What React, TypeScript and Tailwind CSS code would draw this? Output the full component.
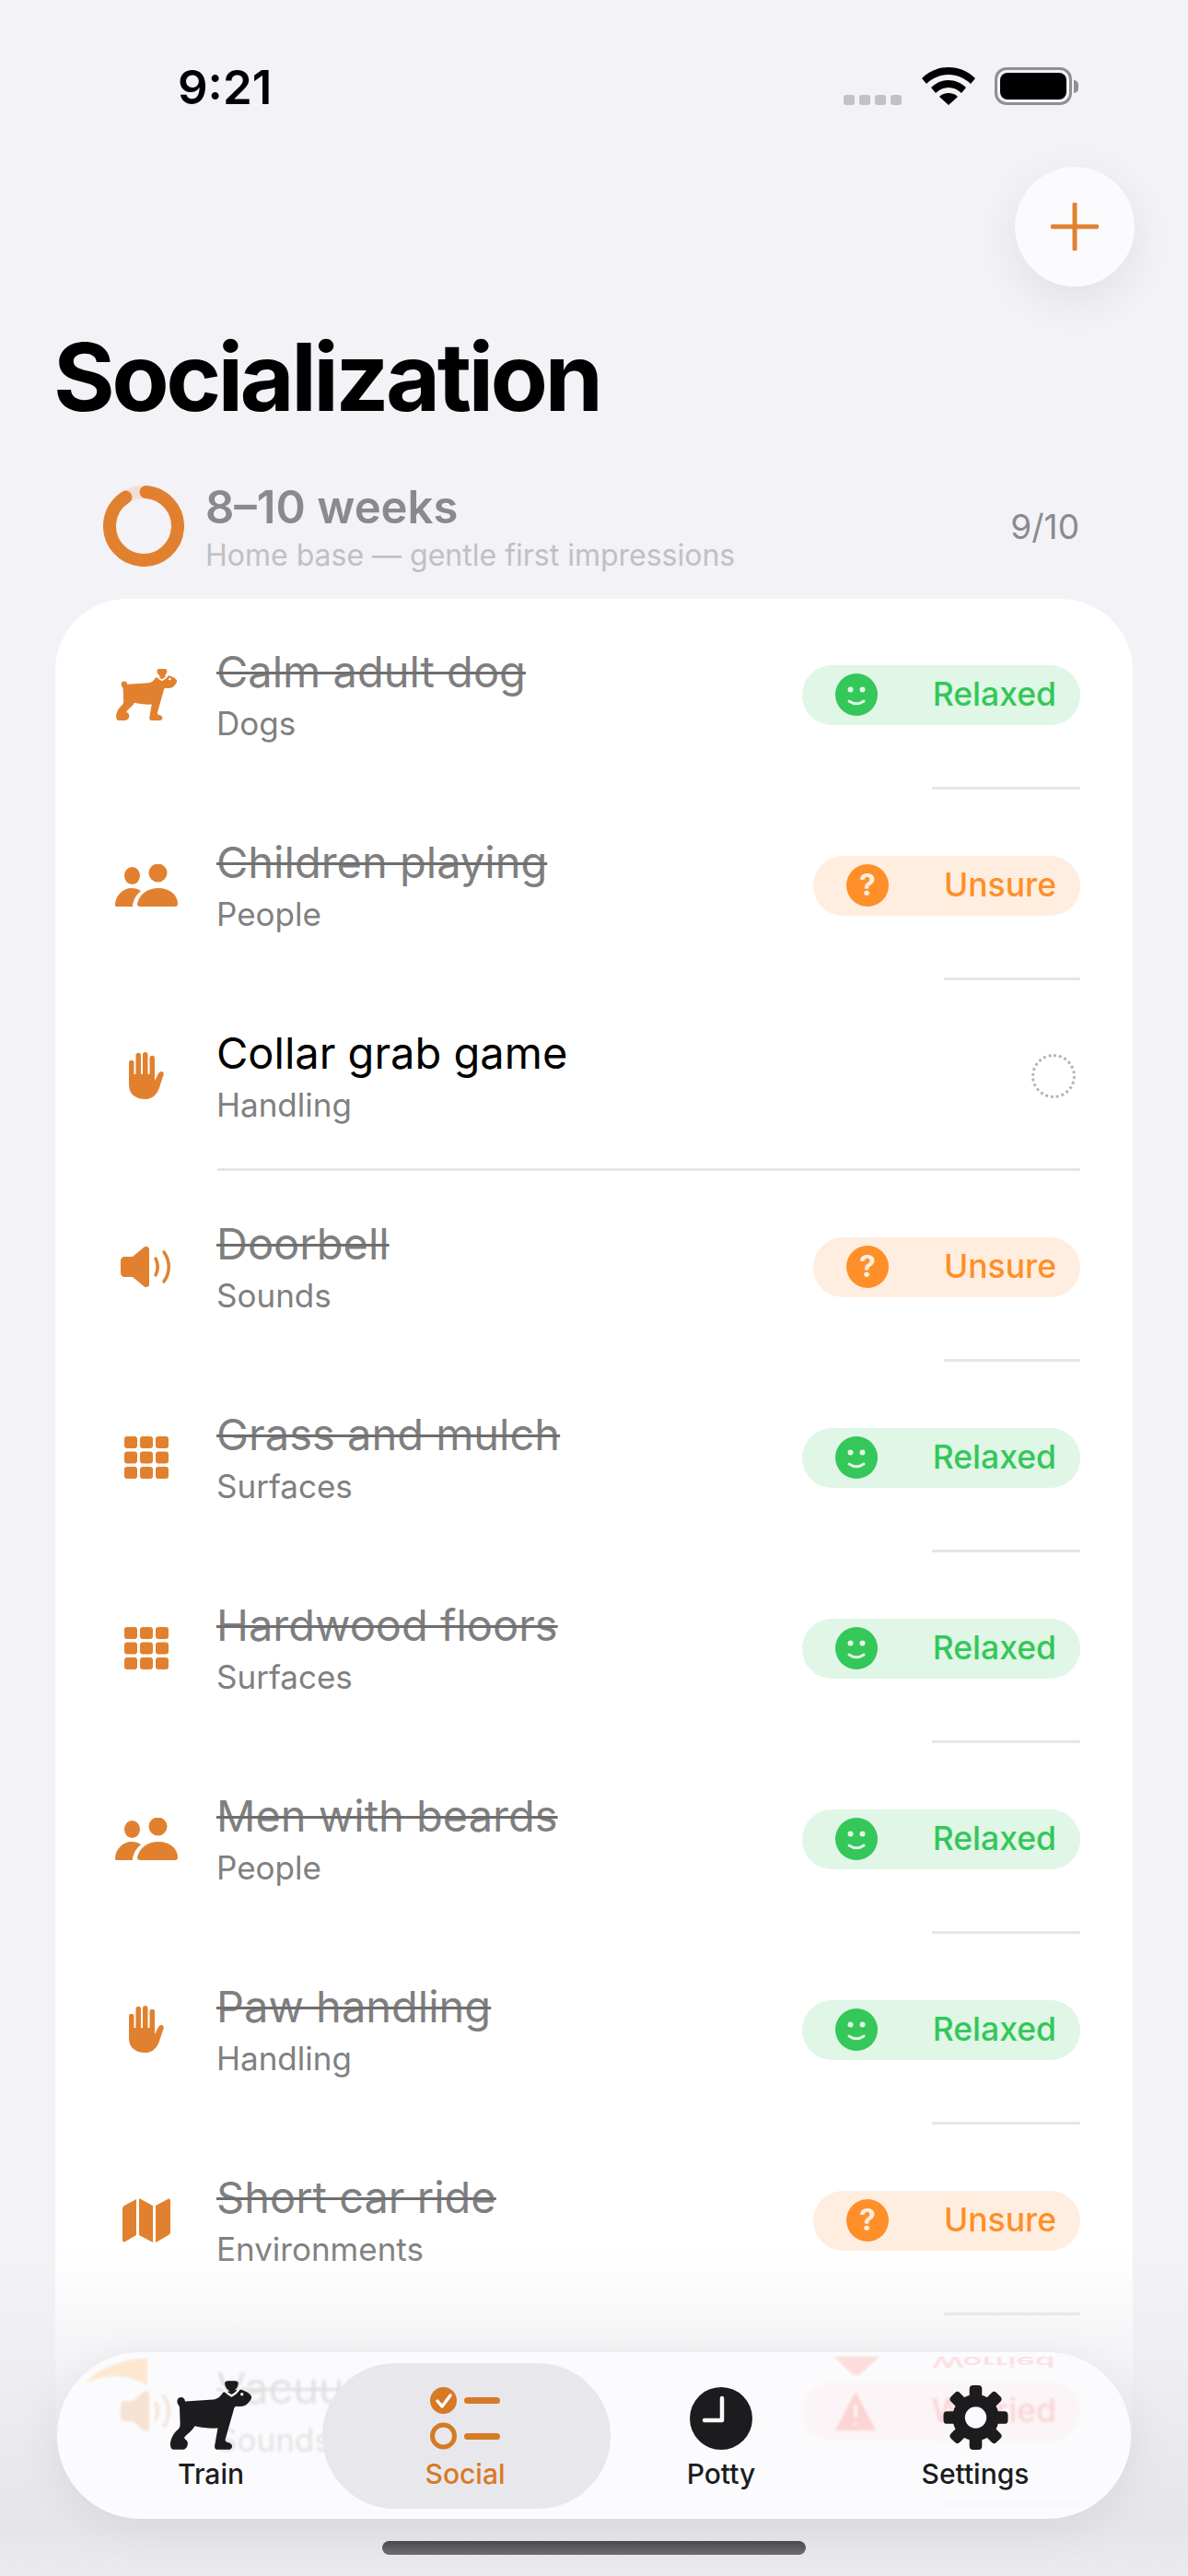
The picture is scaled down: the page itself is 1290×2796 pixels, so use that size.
import type { ReactNode } from "react";

const orange = "#e1812f";

function DogIcon({ className, fill, collar }: { className: string; fill: string; collar: string }) {
  return (
    <svg viewBox="0 0 268 225" className={className}>
      <path
        fill={fill}
        d="M30 85C28 80 22 74 22 67A13 13 0 0 1 48 67L140 61C155 60 165 50 172 38L225 28C240 30 255 38 262 46C268 52 265 60 258 68C250 80 235 87 216 83C212 83 208 88 207 95L180 190C178 196 182 200 188 201C196 202 202 208 202 214C202 221 196 225 188 225L155 225C147 225 144 220 145 212L155 155C130 156 100 154 80 148C72 162 58 172 48 182C44 186 46 190 50 192C56 195 58 202 56 210C54 220 46 225 38 225L12 225C4 225 0 218 0 208C0 190 10 172 24 160C30 155 32 148 32 140Z"
      />
      <path fill="none" stroke={collar} strokeWidth="7" d="M170 16C174 30 186 42 200 49C214 42 226 30 230 14" />
      <path fill={fill} d="M178 8C178 3 182 0 188 0H212C218 0 222 3 222 8C222 20 214 30 200 38C186 30 178 20 178 8Z" />
      <circle cx="234" cy="44" r="5" fill={collar} />
    </svg>
  );
}

function PeopleIcon() {
  return (
    <svg viewBox="0 0 68 46" className="h-[46px] w-[68px]" fill={orange}>
      <ellipse cx="18.5" cy="12.5" rx="8.5" ry="9.5" />
      <ellipse cx="46.5" cy="9.5" rx="10" ry="10" />
      <path d="M1 46c-1 0-1-2-1-3 1-9 8-17 18-17 4 0 7 1 10 3-5 4-8 9-9 15 0 2 0 2 1 2z" />
      <path d="M27 46c-2 0-3-1-3-3 2-10 11-17 23-17s21 7 21 17c0 2-1 3-3 3z" />
    </svg>
  );
}

function HandIcon() {
  return (
    <svg viewBox="0 0 38 52" className="h-[52px] w-[38px]" fill={orange}>
      <path d="M0 11.500a2.750 2.750 0 0 1 5.500 0V24h2V3.500a2.750 2.750 0 0 1 5.500 0V24h2V2.750a2.750 2.750 0 0 1 5.500 0V24h2V6.500a2.750 2.750 0 0 1 5.500 0V31l3.500-7c1-2 2.500-3 4-3 2 0 2.500 2 2 4l-5 15c-3 7-8 11-14 11C6 51 0 45 0 35z" />
    </svg>
  );
}

function SpeakerIcon() {
  return (
    <svg viewBox="0 0 56 44" className="h-[44px] w-[56px]">
      <path
        fill={orange}
        d="M0 15c0-2 2-4 4-4h9L25 1c2-2 6-1 6 2v38c0 3-4 4-6 2L13 33H4c-2 0-4-2-4-4z"
      />
      <path fill="none" stroke={orange} strokeWidth="3.500" strokeLinecap="round" d="M38 13c3 6 3 12 0 18" />
      <path fill="none" stroke={orange} strokeWidth="3.500" strokeLinecap="round" d="M47 6c7 10 7 22 0 32" />
    </svg>
  );
}

function GridIcon() {
  return (
    <svg viewBox="0 0 48 46" className="h-[46px] w-[48px]" fill={orange}>
      {[0, 17, 34].map((x) =>
        [0, 16.5, 33].map((y) => <rect key={`${x}-${y}`} x={x} y={y} width="14" height="13" rx="3" />),
      )}
    </svg>
  );
}

function MapIcon() {
  return (
    <svg viewBox="0 0 52 48" className="h-[48px] w-[52px]" fill={orange}>
      <path d="M0 11c0-1 1-2 2-3l13-7v39L3 47c-2 1-3 0-3-2z" />
      <path d="M18 0l15 8v40l-15-8z" />
      <path d="M36 8l13-7c2-1 3 0 3 2v34c0 1-1 2-2 3l-14 8z" />
    </svg>
  );
}

function SmileFace() {
  return (
    <svg viewBox="0 0 46 46" className="h-[46px] w-[46px]">
      <circle cx="23" cy="23" r="23" fill="#34c759" />
      <circle cx="16.5" cy="17.5" r="3" fill="#e0f6e6" />
      <circle cx="29.5" cy="17.5" r="3" fill="#e0f6e6" />
      <path d="M15 30c5 3.500 11 3.500 16 0" fill="none" stroke="#e0f6e6" strokeWidth="3" strokeLinecap="round" />
    </svg>
  );
}

function QuestionFace() {
  return (
    <div className="flex h-[46px] w-[46px] items-center justify-center rounded-full bg-[#ff8f28] text-[32px] leading-none font-bold text-[#feeee0]">
      ?
    </div>
  );
}

function WarnFace() {
  return (
    <svg viewBox="0 0 46 46" className="h-[46px] w-[46px]">
      <path d="M23 2L45 44H1z" fill="#ff3b30" />
      <path d="M23 16v14M23 35v3" stroke="#ffe2e0" strokeWidth="4" />
    </svg>
  );
}

type Mood = "Relaxed" | "Unsure" | "Worried" | null;

const moods = {
  Relaxed: { bg: "bg-[#e0f6e6]", text: "text-[#34c759]", icon: <SmileFace /> },
  Unsure: { bg: "bg-[#ffeee0]", text: "text-[#ff8f28]", icon: <QuestionFace /> },
  Worried: { bg: "bg-[#ffe2e0]", text: "text-[#ff3b30]", icon: <WarnFace /> },
};

function Badge({ mood }: { mood: Exclude<Mood, null> }) {
  const m = moods[mood];
  return (
    <div className={`flex h-[65px] items-center gap-[60px] rounded-full pr-[26px] pl-[36px] ${m.bg}`}>
      {m.icon}
      <span className={`text-[35.5px] leading-none font-medium ${m.text}`}>{mood}</span>
    </div>
  );
}

type RowData = { title: string; sub: string; icon: ReactNode; mood: Mood; sep: string };

const rows: RowData[] = [
  { title: "Calm adult dog", sub: "Dogs", icon: <DogIcon className="h-[56px] w-[67px]" fill={orange} collar="#ffffff" />, mood: "Relaxed", sep: "w-[161px]" },
  { title: "Children playing", sub: "People", icon: <PeopleIcon />, mood: "Unsure", sep: "w-[148px]" },
  { title: "Collar grab game", sub: "Handling", icon: <HandIcon />, mood: null, sep: "w-[937px]" },
  { title: "Doorbell", sub: "Sounds", icon: <SpeakerIcon />, mood: "Unsure", sep: "w-[148px]" },
  { title: "Grass and mulch", sub: "Surfaces", icon: <GridIcon />, mood: "Relaxed", sep: "w-[161px]" },
  { title: "Hardwood floors", sub: "Surfaces", icon: <GridIcon />, mood: "Relaxed", sep: "w-[161px]" },
  { title: "Men with beards", sub: "People", icon: <PeopleIcon />, mood: "Relaxed", sep: "w-[161px]" },
  { title: "Paw handling", sub: "Handling", icon: <HandIcon />, mood: "Relaxed", sep: "w-[161px]" },
  { title: "Short car ride", sub: "Environments", icon: <MapIcon />, mood: "Unsure", sep: "w-[148px]" },
  { title: "Vacuum cleaner", sub: "Sounds", icon: <SpeakerIcon />, mood: "Worried", sep: "w-[148px]" },
];

function Row({ row }: { row: RowData }) {
  return (
    <div className="flex h-[207px] flex-col">
      <div className="flex h-[204px] items-center pt-[4px] pr-[57px]">
        <div className="flex w-[175px] shrink-0 justify-center pl-[23px]">
          <div className="flex h-[60px] w-[80px] items-center justify-center">{row.icon}</div>
        </div>
        <div className="flex flex-col">
          <span
            className={`text-[47px] leading-[56px] ${row.mood ? "text-[#7f7f7f] line-through decoration-[#6e6e70] decoration-[3px]" : "text-black"}`}
          >
            {row.title}
          </span>
          <span className="mt-[6px] text-[35px] leading-[44px] text-[#808080]">{row.sub}</span>
        </div>
        <div className="ml-auto flex items-center">
          {row.mood ? (
            <Badge mood={row.mood} />
          ) : (
            <div className="mr-[5px] h-[48px] w-[48px] rounded-full border-[3px] border-dotted border-[#b5b5b8]" />
          )}
        </div>
      </div>
      <div className={`mr-[57px] ml-auto h-[3px] bg-[#e5e5ea] ${row.sep}`} />
    </div>
  );
}

function Ring() {
  return (
    <svg viewBox="0 0 88 88" className="mb-[5px] h-[88px] w-[88px] shrink-0 -rotate-90">
      <circle cx="44" cy="44" r="37" fill="none" stroke="#f0dfd2" strokeWidth="14" />
      <circle
        cx="44"
        cy="44"
        r="37"
        fill="none"
        stroke={orange}
        strokeWidth="14"
        strokeLinecap="round"
        pathLength="100"
        strokeDasharray="90 100"
        transform="rotate(4 44 44)"
      />
    </svg>
  );
}

function StatusBar() {
  return (
    <div className="flex h-[181px] items-start justify-between pr-[119px] pl-[193px]">
      <span className="mt-[65px] text-[51px] leading-[60px] font-semibold text-black">9:21</span>
      <div className="mt-[73px] flex items-end">
        <div className="flex gap-[5px]">
          {[0, 1, 2, 3].map((i) => (
            <div key={i} className="h-[11px] w-[12px] rounded-[3px] bg-[#c2c2c6]" />
          ))}
        </div>
        <svg viewBox="0 0 58 41" className="ml-[22px] h-[41px] w-[58px]">
          <path fill="#000" d="M29 0c11 0 21 4 29 12l-5 6c-6-6-15-10-24-10S11 12 5 18l-5-6C8 4 18 0 29 0z" />
          <path fill="#000" d="M29 14c7 0 14 3 19 8l-5 6c-4-4-9-6-14-6s-10 2-14 6l-5-6c5-5 12-8 19-8z" />
          <path fill="#000" d="M29 28c4 0 7 1 10 4L29 41 19 32c3-3 6-4 10-4z" />
        </svg>
        <div className="ml-[21px] flex items-center">
          <div className="flex h-[41px] w-[84px] items-center justify-center rounded-[13px] border-[3px] border-[#8e8e93]">
            <div className="h-[29px] w-[72px] rounded-[8px] bg-black" />
          </div>
          <div className="ml-[2px] h-[14px] w-[5px] rounded-r-full bg-[#8e8e93]" />
        </div>
      </div>
    </div>
  );
}

function SocialIcon() {
  return (
    <svg viewBox="0 0 76 68" className="h-[68px] w-[76px]">
      <circle cx="14.5" cy="14.5" r="14.500" fill="#d67a26" />
      <path d="M8 15l5 6 9-12" fill="none" stroke="#fff" strokeWidth="3.500" strokeLinecap="round" strokeLinejoin="round" />
      <circle cx="14.5" cy="53" r="12" fill="none" stroke="#d67a26" strokeWidth="5" />
      <rect x="37" y="11" width="39" height="7" rx="3.500" fill="#d67a26" />
      <rect x="37" y="50" width="39" height="7" rx="3.500" fill="#d67a26" />
    </svg>
  );
}

function ClockIcon() {
  return (
    <svg viewBox="0 0 68 68" className="h-[68px] w-[68px]">
      <circle cx="34" cy="34" r="34" fill="#1c1c1e" />
      <path d="M35 12v24H16" fill="none" stroke="#fbfbfd" strokeWidth="4.500" strokeLinecap="round" strokeLinejoin="round" />
    </svg>
  );
}

function GearIcon() {
  return (
    <svg viewBox="0 0 72 72" className="h-[70px] w-[71px]">
      <circle cx="36" cy="36" r="26" fill="#1c1c1e" />
      {[0, 45, 90, 135, 180, 225, 270, 315].map((a) => (
        <rect key={a} x="29" y="0" width="14" height="20" rx="4" fill="#1c1c1e" transform={`rotate(${a} 36 36)`} />
      ))}
      <circle cx="36" cy="36" r="12" fill="#fbfbfd" />
    </svg>
  );
}

function TabItem({ icon, label, active, className }: { icon: ReactNode; label: string; active?: boolean; className: string }) {
  return (
    <div className={`relative flex flex-col items-center ${className}`}>
      <div className="flex h-[76px] items-end justify-center">{icon}</div>
      <span className={`mt-[6px] text-[30px] leading-[40px] font-medium ${active ? "text-[#d67a26]" : "text-[#1c1c1e]"}`}>
        {label}
      </span>
    </div>
  );
}

// what shows through the glass of the tab bar: row 10 and its refraction along the top edge
function GlassGhost() {
  return (
    <div className="absolute inset-0 overflow-hidden rounded-full">
      <div className="absolute top-[-40px] left-[-2px] w-[1170px] opacity-20 blur-[1.5px]">
        <Row row={rows[9]} />
      </div>
      <svg viewBox="0 0 70 30" className="absolute top-[6px] left-[31px] h-[30px] w-[70px] opacity-25 blur-[1px]">
        <path d="M0 28C12 12 36 3 67 0V30C42 16 20 18 0 28z" fill="#ffb04a" />
      </svg>
      <svg viewBox="0 0 50 20" className="absolute top-[5px] left-[843px] h-[20px] w-[50px] opacity-15 blur-[1px]">
        <path d="M0 0H50L28 20H22z" fill="#ff3b30" />
      </svg>
      <span className="absolute top-[-2px] left-[950px] text-[35px] leading-[26px] font-medium text-[#ff3b30] opacity-15 blur-[1px] [transform:scaleY(-0.45)]">
        Worried
      </span>
    </div>
  );
}

function TabBar() {
  return (
    <div className="absolute top-[2553px] left-[62px] z-20 flex h-[181px] w-[1166px] items-center rounded-full bg-[#fbfbfd] pl-[12px] shadow-[0_8px_50px_rgba(0,0,0,0.07)]">
      <GlassGhost />
      <TabItem icon={<DogIcon className="h-[75px] w-[89px]" fill="#1c1c1e" collar="#fbfbfd" />} label="Train" className="w-[276px] pl-[34px]" />
      <div className="relative flex h-[158px] w-[313px] shrink-0 items-center justify-center rounded-full bg-[#e8e8ec]">
        <TabItem icon={<SocialIcon />} label="Social" active className="w-full pr-[3px]" />
      </div>
      <TabItem icon={<ClockIcon />} label="Potty" className="w-[240px]" />
      <TabItem icon={<GearIcon />} label="Settings" className="w-[312px]" />
    </div>
  );
}

export default function App() {
  return (
    <div className="relative h-[2796px] w-[1290px] overflow-hidden bg-[#f2f2f7] [font-family:Inter,'Noto_Sans',sans-serif]">
      <StatusBar />
      <div className="flex h-[130px] justify-end pr-[58px]">
        <div className="flex h-[130px] w-[130px] items-center justify-center rounded-full bg-[#fbfbfd] shadow-[0_14px_50px_rgba(0,0,0,0.08)]">
          <svg viewBox="0 0 52 52" className="h-[52px] w-[52px]" stroke={orange} strokeWidth="5" strokeLinecap="round">
            <path d="M26 2v48M2 26h48" />
          </svg>
        </div>
      </div>
      <h1 className="mt-[38px] pl-[58px] text-[102px] leading-[120px] font-bold tracking-[-3.6px] text-black">
        Socialization
      </h1>
      <div className="mt-[54px] flex items-center pr-[118px] pl-[112px]">
        <Ring />
        <div className="ml-[23px] flex flex-col">
          <span className="text-[49px] leading-[56px] font-semibold text-[#8a8a8e]">8–10 weeks</span>
          <span className="mt-[4px] text-[32px] leading-[40px] text-[#c0c0c4]">
            Home base — gentle first impressions
          </span>
        </div>
        <span className="mb-[4px] ml-auto text-[37px] leading-none text-[#8a8a8e]">9/10</span>
      </div>
      <div className="mx-[60px] mt-[27px] rounded-[78px] bg-white">
        {rows.map((row) => (
          <Row key={row.title} row={row} />
        ))}
      </div>
      <div className="absolute inset-x-0 bottom-0 z-10 h-[356px] bg-[linear-gradient(to_bottom,rgba(236,236,240,0)_0%,rgba(236,236,240,0.55)_32%,rgba(228,228,233,0.95)_85%,rgba(235,235,239,1)_100%)]" />
      <TabBar />
      <div className="absolute top-[2758px] left-[415px] z-20 h-[15px] w-[460px] rounded-full bg-gradient-to-b from-[#4a4a4c] to-[#6f6f72]" />
    </div>
  );
}
